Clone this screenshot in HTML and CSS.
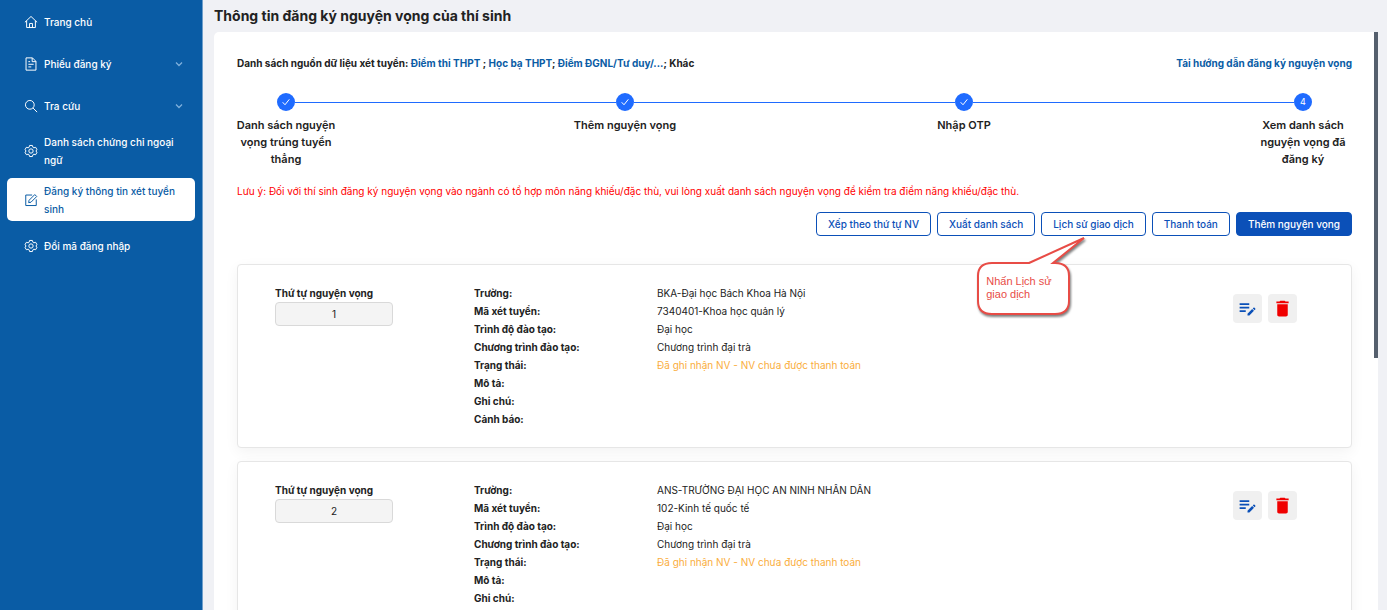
FILE: index.html
```html
<!DOCTYPE html>
<html lang="vi">
<head>
    <meta charset="UTF-8">
    <meta name="viewport" content="width=device-width, initial-scale=1.0">
    <title>Thông tin đăng ký nguyện vọng của thí sinh</title>
    <link rel="stylesheet" href="styles.css">
</head>
<body>
    <!-- Shared icons -->
    <svg class="sprite" aria-hidden="true">
        <symbol id="i-gear" viewBox="0 0 24 24"><path d="M9.6 2.5h4.8l.9 3.1 1.6.9 3.1-.8 2.4 4.2-2.2 2.1 2.2 2.1-2.4 4.2-3.1-.8-1.6.9-.9 3.1H9.6l-.9-3.1-1.6-.9-3.1.8-2.4-4.2L3.8 12 1.600 9.900l2.400-4.200 3.100.800 1.600-.900z"/><circle cx="12" cy="12" r="3.700"/></symbol>
        <symbol id="i-down" viewBox="0 0 10 10"><path d="M2 3.500l3 3 3-3"/></symbol>
        <symbol id="i-check" viewBox="0 0 12 12"><path d="M2 6.300l2.800 3L10 2.800"/></symbol>
        <symbol id="i-edit-note" viewBox="0 0 24 24"><path d="M3 10h11v2H3zm0-4h11v2H3zm0 8h7v2H3zm15.010-2.130l.71-.71a.996.996 0 0 1 1.410 0l.71.71c.39.39.39 1.020 0 1.410l-.71.71zm-.71.71l-5.300 5.300V20h2.120l5.300-5.300z"/></symbol>
        <symbol id="i-trash" viewBox="0 0 24 24"><path d="M6 19c0 1.100.9 2 2 2h8c1.100 0 2-.9 2-2V7H6zM19 4h-3.500l-1-1h-5l-1 1H5v2h14z"/></symbol>
    </svg>

    <div class="layout">
        <nav class="sidebar">
            <a class="menu-item" href="#">
                <svg class="menu-icon" viewBox="0 0 24 24"><path d="M1.500 12.500L12 2.500l10.500 10M4.500 10v11.500h15V10M9.500 21.500v-7h5v7"/></svg>
                <span>Trang chủ</span>
            </a>
            <a class="menu-item" href="#">
                <svg class="menu-icon" viewBox="0 0 24 24"><path d="M3.500 1.500h11l6 6v15h-17zM14 1.500V8h6.500M7.500 12.500h9M7.500 17h5M7.500 8h3"/></svg>
                <span>Phiếu đăng ký</span>
                <svg class="menu-arrow"><use href="#i-down"/></svg>
            </a>
            <a class="menu-item" href="#">
                <svg class="menu-icon" viewBox="0 0 24 24"><circle cx="10" cy="10" r="7.500"/><path d="M15.500 15.500L22.500 22.500"/></svg>
                <span>Tra cứu</span>
                <svg class="menu-arrow"><use href="#i-down"/></svg>
            </a>
            <a class="menu-item" href="#">
                <svg class="menu-icon"><use href="#i-gear"/></svg>
                <span>Danh sách chứng chỉ ngoại ngữ</span>
            </a>
            <a class="menu-item active" href="#">
                <svg class="menu-icon" viewBox="0 0 24 24"><path d="M14 3.500H3v18h18V11M8 16.500l.7-4L18.500 2.700l3.300 3.300L12 15.800z"/></svg>
                <span>Đăng ký thông tin xét tuyển sinh</span>
            </a>
            <a class="menu-item" href="#">
                <svg class="menu-icon"><use href="#i-gear"/></svg>
                <span>Đổi mã đăng nhập</span>
            </a>
        </nav>

        <main class="main">
            <h1 class="page-title">Thông tin đăng ký nguyện vọng của thí sinh</h1>

            <div class="panel">
                <div class="scroll-thumb"></div>

                <div class="sources">
                    <p>Danh sách nguồn dữ liệu xét tuyển: <a href="#">Điểm thi THPT</a> ; <a href="#">Học bạ THPT</a>; <a href="#">Điểm ĐGNL/Tư duy/...</a>; Khác</p>
                    <a href="#">Tải hướng dẫn đăng ký nguyện vọng</a>
                </div>

                <ol class="steps">
                    <li class="step">
                        <div class="step-head"><span class="step-icon"><svg><use href="#i-check"/></svg></span></div>
                        <div class="step-label">Danh sách nguyện vọng trúng tuyển thẳng</div>
                    </li>
                    <li class="step">
                        <div class="step-head"><span class="step-icon"><svg><use href="#i-check"/></svg></span></div>
                        <div class="step-label">Thêm nguyện vọng</div>
                    </li>
                    <li class="step">
                        <div class="step-head"><span class="step-icon"><svg><use href="#i-check"/></svg></span></div>
                        <div class="step-label">Nhập OTP</div>
                    </li>
                    <li class="step">
                        <div class="step-head"><span class="step-icon">4</span></div>
                        <div class="step-label">Xem danh sách nguyện vọng đã đăng ký</div>
                    </li>
                </ol>

                <p class="notice">Lưu ý: Đối với thí sinh đăng ký nguyện vọng vào ngành có tổ hợp môn năng khiếu/đặc thù, vui lòng xuất danh sách nguyện vọng để kiểm tra điểm năng khiếu/đặc thù.</p>

                <div class="toolbar">
                    <button class="btn">Xếp theo thứ tự NV</button>
                    <button class="btn">Xuất danh sách</button>
                    <div class="hinted">
                        <button class="btn">Lịch sử giao dịch</button>
                        <div class="callout">
                            <svg viewBox="0 0 120 90"><path d="M58 29L113 4L82 29H84Q98 29 98 42V67Q98 80 84 80H21Q7 80 7 67V42Q7 29 21 29Z"/></svg>
                            <p>Nhấn Lịch sử giao dịch</p>
                        </div>
                    </div>
                    <button class="btn">Thanh toán</button>
                    <button class="btn btn-primary">Thêm nguyện vọng</button>
                </div>

                <!-- Wish list -->
                <div class="wishes">
                    <section class="wish">
                        <div class="order">
                            <label for="order1">Thứ tự nguyện vọng</label>
                            <input type="text" id="order1" value="1" readonly>
                        </div>
                        <dl class="info">
                            <dt>Trường:</dt><dd>BKA-Đại học Bách Khoa Hà Nội</dd>
                            <dt>Mã xét tuyển:</dt><dd>7340401-Khoa học quản lý</dd>
                            <dt>Trình độ đào tạo:</dt><dd>Đại học</dd>
                            <dt>Chương trình đào tạo:</dt><dd>Chương trình đại trà</dd>
                            <dt>Trạng thái:</dt><dd class="pending">Đã ghi nhận NV - NV chưa được thanh toán</dd>
                            <dt>Mô tả:</dt><dd></dd>
                            <dt>Ghi chú:</dt><dd></dd>
                            <dt>Cảnh báo:</dt><dd></dd>
                        </dl>
                        <div class="actions">
                            <button class="icon-btn edit" aria-label="Sửa"><svg><use href="#i-edit-note"/></svg></button>
                            <button class="icon-btn delete" aria-label="Xóa"><svg><use href="#i-trash"/></svg></button>
                        </div>
                    </section>

                    <section class="wish">
                        <div class="order">
                            <label for="order2">Thứ tự nguyện vọng</label>
                            <input type="text" id="order2" value="2" readonly>
                        </div>
                        <dl class="info">
                            <dt>Trường:</dt><dd>ANS-TRƯỜNG ĐẠI HỌC AN NINH NHÂN DÂN</dd>
                            <dt>Mã xét tuyển:</dt><dd>102-Kinh tế quốc tế</dd>
                            <dt>Trình độ đào tạo:</dt><dd>Đại học</dd>
                            <dt>Chương trình đào tạo:</dt><dd>Chương trình đại trà</dd>
                            <dt>Trạng thái:</dt><dd class="pending">Đã ghi nhận NV - NV chưa được thanh toán</dd>
                            <dt>Mô tả:</dt><dd></dd>
                            <dt>Ghi chú:</dt><dd></dd>
                        </dl>
                        <div class="actions">
                            <button class="icon-btn edit" aria-label="Sửa"><svg><use href="#i-edit-note"/></svg></button>
                            <button class="icon-btn delete" aria-label="Xóa"><svg><use href="#i-trash"/></svg></button>
                        </div>
                    </section>
                </div>
            </div>
        </main>
    </div>
</body>
</html>
```

FILE: styles.css
```css
* {
    margin: 0;
    padding: 0;
    box-sizing: border-box;
}

body {
    font-family: Inter, "Liberation Sans", sans-serif;
    font-size: 10px;
    line-height: 18px;
    color: #222;
    background: #f0f1f5;
}

a {
    color: #0a5ca5;
    text-decoration: none;
}

button,
input {
    font: inherit;
}

.sprite {
    display: none;
}

.layout {
    display: flex;
    height: 100vh;
    overflow: hidden;
}

/* Sidebar */
.sidebar {
    display: flex;
    flex-direction: column;
    gap: 6px;
    width: 203px;
    flex-shrink: 0;
    padding: 3px 7px;
    background: #0a5ca5;
    border-right: 1px solid #6f9fcb;
}

.menu-item {
    display: flex;
    align-items: center;
    gap: 6px;
    min-height: 36px;
    padding: 4px 11px 3px 17px;
    border-radius: 5px;
    font-weight: 500;
    color: #fff;
}

.menu-item.active {
    background: #fff;
    color: #0a5ca5;
}

.menu-icon {
    width: 14px;
    height: 14px;
    flex-shrink: 0;
    fill: none;
    stroke: currentColor;
    stroke-width: 1.7;
}

.menu-arrow {
    width: 10px;
    height: 10px;
    margin-left: auto;
    fill: none;
    stroke: #7fb0dc;
    stroke-width: 1.3;
}

/* Content */
.main {
    display: flex;
    flex-direction: column;
    flex: 1;
    min-width: 0;
    padding: 0 9px 0 11px;
}

.page-title {
    height: 32px;
    flex-shrink: 0;
    font-size: 14px;
    font-weight: 700;
    line-height: 32px;
}

.panel {
    position: relative;
    flex: 1;
    min-height: 0;
    overflow: hidden;
    padding: 22px 26px 0 23px;
    background: #fff;
    border-radius: 5px 0 0 0;
}

.scroll-thumb {
    position: absolute;
    top: 0;
    right: 0;
    width: 4px;
    height: 326px;
    background: #555f6d;
}

.sources {
    display: flex;
    justify-content: space-between;
    font-weight: 700;
}

/* Steps */
.steps {
    display: flex;
    margin: 21px -3px 14px;
    list-style: none;
}

.step {
    flex: 1;
}

.step:last-child {
    flex: none;
}

.step-head {
    display: flex;
    align-items: center;
    margin: 0 -43px 6px 43px;
}

.step-head::after {
    content: "";
    flex: 1;
    height: 1px;
    background: #1f6bff;
}

.step:last-child .step-head {
    margin-right: 0;
}

.step:last-child .step-head::after {
    display: none;
}

.step-icon {
    display: flex;
    align-items: center;
    justify-content: center;
    width: 18px;
    height: 18px;
    border-radius: 50%;
    background: #1f6bff;
    color: #fff;
    font-size: 9px;
}

.step-icon svg {
    width: 10px;
    height: 10px;
    fill: none;
    stroke: #fff;
    stroke-width: 1.2;
}

.step-label {
    width: 104px;
    font-size: 11px;
    font-weight: 600;
    line-height: 17px;
    text-align: center;
}

.notice {
    color: #f00;
}

/* Toolbar */
.toolbar {
    display: flex;
    flex-wrap: wrap;
    justify-content: flex-end;
    gap: 6px;
    margin: 12px 0 28px;
}

.btn {
    display: block;
    height: 24px;
    padding: 0 11px;
    border: 1px solid #0b50b8;
    border-radius: 4px;
    background: #fff;
    color: #0b50b8;
    font-weight: 500;
    cursor: pointer;
}

.btn-primary {
    background: #0b50b8;
    color: #fff;
}

.hinted {
    position: relative;
}

.callout {
    position: absolute;
    top: 22px;
    left: -70px;
    z-index: 1;
    width: 120px;
    height: 90px;
    pointer-events: none;
}

.callout svg {
    display: block;
    width: 120px;
    height: 90px;
    fill: #fff;
    stroke: #e84c46;
    stroke-width: 2;
    filter: drop-shadow(1px 2px 1px rgba(0, 0, 0, 0.5));
}

.callout p {
    position: absolute;
    top: 41px;
    left: 15px;
    width: 76px;
    font-family: "Liberation Sans", sans-serif;
    font-size: 11px;
    line-height: 13px;
    color: #e84c46;
}

/* Wish cards */
.wishes {
    display: flex;
    flex-direction: column;
    gap: 13px;
}

.wish {
    display: flex;
    min-height: 184px;
    padding: 19px 54px 18px 37px;
    border: 1px solid #e6e6e6;
    border-radius: 4px;
    background: #fff;
    box-shadow: 0 4px 14px rgba(0, 0, 0, 0.05);
}

.order {
    width: 199px;
}

.order label {
    display: block;
    font-weight: 700;
}

.order input {
    display: block;
    width: 118px;
    height: 24px;
    border: 1px solid #d9d9d9;
    border-radius: 4px;
    background: #f4f4f4;
    color: #222;
    text-align: center;
}

.info {
    display: grid;
    grid-template-columns: 183px 1fr;
    grid-auto-rows: 18px;
    flex: 1;
}

.info dt {
    font-weight: 700;
}

.info .pending {
    color: #faad3c;
}

.actions {
    display: flex;
    align-items: flex-start;
    gap: 6px;
    padding-top: 10px;
}

.icon-btn {
    display: flex;
    align-items: center;
    justify-content: center;
    width: 29px;
    height: 29px;
    border: none;
    border-radius: 4px;
    background: #f0f0f0;
    cursor: pointer;
}

.icon-btn svg {
    width: 21px;
    height: 21px;
    fill: currentColor;
}

.edit {
    color: #0b50b8;
}

.delete {
    color: #f00000;
}
```
